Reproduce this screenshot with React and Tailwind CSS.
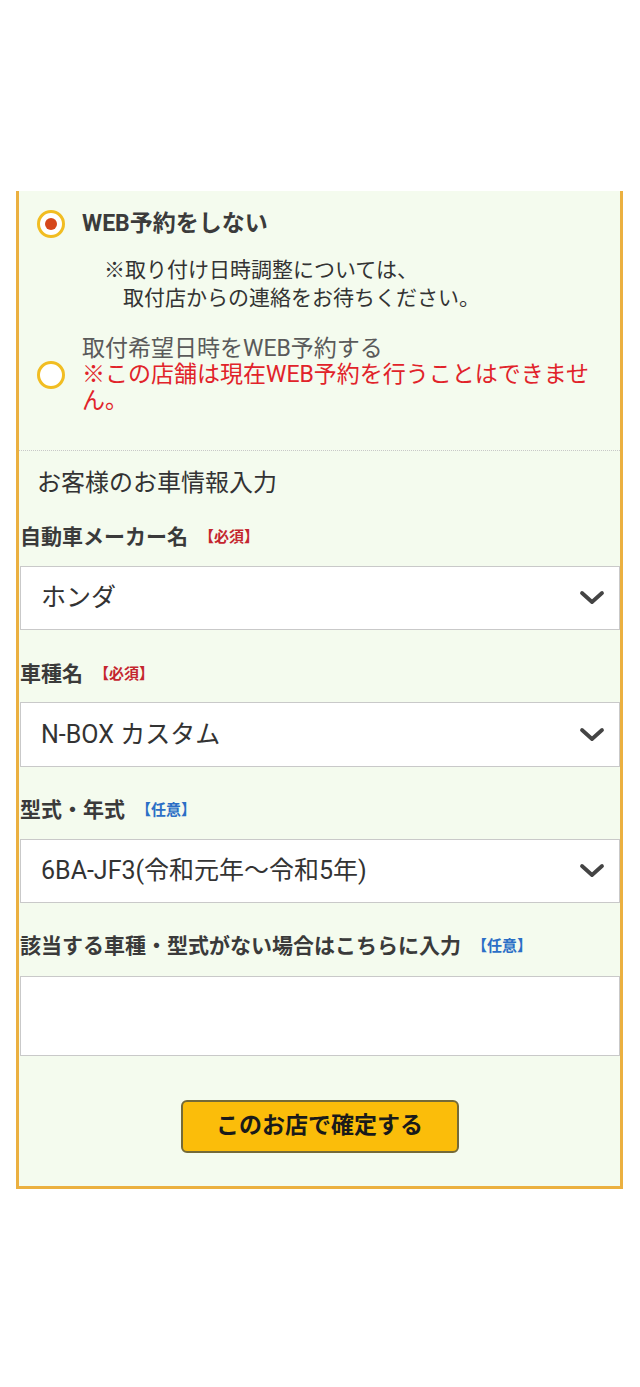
import { useState } from "react";

const font = "font-['Roboto','Noto_Sans_CJK_JP',sans-serif]";

function Chevron() {
  return (
    <svg
      width="26"
      height="16"
      viewBox="0 0 26 16"
      className="pointer-events-none absolute right-[15px] top-1/2 -translate-y-1/2"
    >
      <path
        d="M3 3 L13 12 L23 3"
        fill="none"
        stroke="#444"
        strokeWidth="3.8"
        strokeLinecap="round"
        strokeLinejoin="round"
      />
    </svg>
  );
}

function Radio({ checked }) {
  return (
    <span className="flex h-[28px] w-[28px] shrink-0 items-center justify-center rounded-full border-[3px] border-[#f1bd22] bg-white">
      {checked && <span className="h-[12px] w-[12px] rounded-full bg-[#d5471b]" />}
    </span>
  );
}

function Label({ text, tag, required, className = "" }) {
  return (
    <div className={`flex items-center pl-px leading-[28px] ${className}`}>
      <span className="text-[21px] font-bold text-[#3a3a3a]">{text}</span>
      <span
        className={`ml-[11px] text-[15px] font-bold ${
          required ? "text-[#c4262e]" : "text-[#2b6fc6]"
        }`}
      >
        {tag}
      </span>
    </div>
  );
}

function SelectBox({ value, options, className = "" }) {
  const [val, setVal] = useState(value);
  return (
    <div className={`relative ml-px ${className}`}>
      <select
        value={val}
        onChange={(e) => setVal(e.target.value)}
        className="h-full w-full appearance-none border border-[#c9c9c9] bg-white pl-[20px] text-[25px] text-[#333] outline-none"
      >
        {options.map((o) => (
          <option key={o} value={o}>
            {o}
          </option>
        ))}
      </select>
      <Chevron />
    </div>
  );
}

export default function App() {
  const [mode, setMode] = useState("none");

  return (
    <div className={`min-h-[1387px] bg-white pt-[191px] ${font}`}>
      <div className="ml-[16px] w-[607px] border-x-[3px] border-b-[3px] border-[#ebb040] bg-[#f4fbee] pb-[33px]">
        {/* WEB予約 */}
        <div className="border-b border-dotted border-[#c8c8c8] pb-[36px] pl-[18px] pr-[20px] pt-[17px]">
          <label
            className="flex cursor-pointer items-center gap-[17px] leading-[32px]"
            onClick={() => setMode("none")}
          >
            <Radio checked={mode === "none"} />
            <span className="text-[23px] font-bold text-[#3b3b3b]">WEB予約をしない</span>
          </label>
          <div className="mt-[16px] pl-[67px] text-[21px] leading-[28px] text-[#333]">
            <p>※取り付け日時調整については、</p>
            <p className="pl-[19px]">取付店からの連絡をお待ちください。</p>
          </div>

          <label className="mt-[24px] flex items-center gap-[17px]">
            <Radio checked={false} />
            <span className="text-[23px] font-normal leading-[26px]">
              <span className="block text-[#5a5a5a]">取付希望日時をWEB予約する</span>
              <span className="block text-[#e1232a]">
                ※この店舗は現在WEB予約を行うことはできません。
              </span>
            </span>
          </label>
        </div>

        {/* お車情報 */}
        <h2 className="mt-[16px] pl-[18px] text-[24px] leading-[32px] text-[#333]">
          お客様のお車情報入力
        </h2>

        <Label className="mt-[24px]" text="自動車メーカー名" tag="【必須】" required />
        <SelectBox className="mt-[15px] h-[64px]" value="ホンダ" options={["ホンダ", "トヨタ", "日産"]} />

        <Label className="mt-[30px]" text="車種名" tag="【必須】" required />
        <SelectBox
          className="mt-[14px] h-[65px]"
          value="N-BOX カスタム"
          options={["N-BOX カスタム", "N-BOX", "N-WGN"]}
        />

        <Label className="mt-[29px]" text="型式・年式" tag="【任意】" />
        <SelectBox
          className="mt-[15px] h-[64px]"
          value="6BA-JF3(令和元年～令和5年)"
          options={["6BA-JF3(令和元年～令和5年)"]}
        />

        <Label className="mt-[29px]" text="該当する車種・型式がない場合はこちらに入力" tag="【任意】" />
        <textarea className="ml-px mt-[16px] block h-[80px] w-[600px] resize-none border border-[#c9c9c9] bg-white p-[12px] text-[22px] outline-none" />

        <div className="mt-[44px] flex justify-center">
          <button className="h-[53px] w-[278px] rounded-[6px] border-2 border-[#746a38] bg-[#fbbd0a] text-[23px] font-bold text-[#1a1a1a]">
            このお店で確定する
          </button>
        </div>
      </div>
    </div>
  );
}
